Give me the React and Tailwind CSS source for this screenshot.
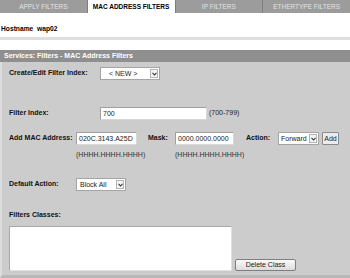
import React from "react";

const font = { fontFamily: '"Liberation Sans", Arial, sans-serif' };

function Chevron() {
  return (
    <svg width="5" height="4" viewBox="0 0 5 4">
      <path d="M0.5 0.8 L2.5 3 L4.5 0.8" fill="none" stroke="#333" strokeWidth="1.1" />
    </svg>
  );
}

function Select({ w, text, pl = "pl-[3px]" }) {
  return (
    <div className={`flex h-[13px] ${w} border border-[#a5a5a5] bg-white`}>
      <div className={`flex-1 ${pl} text-[7px] leading-[11px] text-[#222]`}>{text}</div>
      <div className="m-[1px] flex w-[8px] items-center justify-center border border-[#b5b5b5] bg-[#f4f4f4]">
        <Chevron />
      </div>
    </div>
  );
}

function Input({ w, value }) {
  return (
    <div className={`h-[13px] ${w} border border-[#a0a0a0] border-b-[#d8d8d8] border-r-[#d8d8d8] bg-white pl-[2px] text-[7px] leading-[11px] text-[#222]`}>
      {value}
    </div>
  );
}

function Tab({ label, active }) {
  return (
    <div
      className={`flex flex-1 items-center justify-center border-r border-[#7e7e7e] text-[6.5px] ${
        active ? "bg-white font-bold text-black" : "bg-[#9c9c9c] text-[#e2e2e2]"
      }`}
    >
      {label}
    </div>
  );
}

export default function App() {
  return (
    <div className="flex h-[278px] w-[350px] flex-col bg-white" style={font}>
      <div className="flex h-[13px]">
        <Tab label="APPLY FILTERS" />
        <Tab label="MAC ADDRESS FILTERS" active />
        <Tab label="IP FILTERS" />
        <div className="flex flex-1 items-center justify-center bg-[#9c9c9c] text-[6.5px] text-[#e2e2e2]">
          ETHERTYPE FILTERS
        </div>
      </div>
      <div className="h-[24px] pt-[12px] pl-[1px] text-[6.7px] font-bold leading-[8px] text-black">
        Hostname&nbsp; wap02
      </div>
      <div className="h-[3px] bg-[#dedede]" />
      <div className="h-[10px]" />
      <div className="h-[12px] bg-[#8f8f8f] pl-[4px] text-[7px] font-bold leading-[12px] text-white">
        Services: Filters - MAC Address Filters
      </div>
      <div className="flex flex-1 flex-col border-l-2 border-b-[3px] border-l-[#dcdcdc] border-b-[#b8b8b8] bg-[#cccccc] pl-[7px] pt-[5px] text-[7px] text-[#111]">
        <div className="flex h-[13px] items-center">
          <div className="w-[91px] font-bold">Create/Edit Filter Index:</div>
          <Select w="w-[60px]" text="< NEW >" pl="pl-[8px]" />
        </div>
        <div className="mt-[27px] flex h-[13px] items-center">
          <div className="w-[91px] font-bold">Filter Index:</div>
          <Input w="w-[107px]" value="700" />
          <div className="ml-[2px] text-[#222]">(700-799)</div>
        </div>
        <div className="mt-[12px] flex h-[13px] items-center">
          <div className="w-[67px] font-bold">Add MAC Address:</div>
          <Input w="w-[61px]" value="020C.3143.A25D" />
          <div className="ml-[11px] w-[27px] font-bold">Mask:</div>
          <Input w="w-[59px]" value="0000.0000.0000" />
          <div className="ml-[12px] w-[32px] font-bold">Action:</div>
          <Select w="w-[41px]" text="Forward" pl="pl-[2px]" />
          <div className="ml-[3px] h-[13px] w-[17px] rounded-[1px] border border-[#8a8a8a] bg-[#ececec] text-center leading-[11px] text-[#222]">
            Add
          </div>
        </div>
        <div className="mt-[6px] flex h-[8px] items-center leading-[8px] text-[#333]">
          <div className="w-[67px]" />
          <div className="w-[99px]">(HHHH.HHHH.HHHH)</div>
          <div>(HHHH.HHHH.HHHH)</div>
        </div>
        <div className="mt-[19px] flex h-[13px] items-center">
          <div className="w-[67px] font-bold">Default Action:</div>
          <Select w="w-[50px]" text="Block All" pl="pl-[3px]" />
        </div>
        <div className="mt-[20px] h-[8px] font-bold leading-[8px]">Filters Classes:</div>
        <div className="mt-[7px] flex items-end">
          <div className="h-[45px] w-[223px] border border-[#a8a8a8] border-b-[#e0e0e0] border-r-[#e0e0e0] bg-white" />
          <div className="ml-[3px] h-[12px] w-[61px] rounded-[2px] border border-[#7f7f7f] bg-gradient-to-b from-[#fafafa] to-[#dcdcdc] text-center leading-[10px] text-[#222]">
            Delete Class
          </div>
        </div>
      </div>
    </div>
  );
}
